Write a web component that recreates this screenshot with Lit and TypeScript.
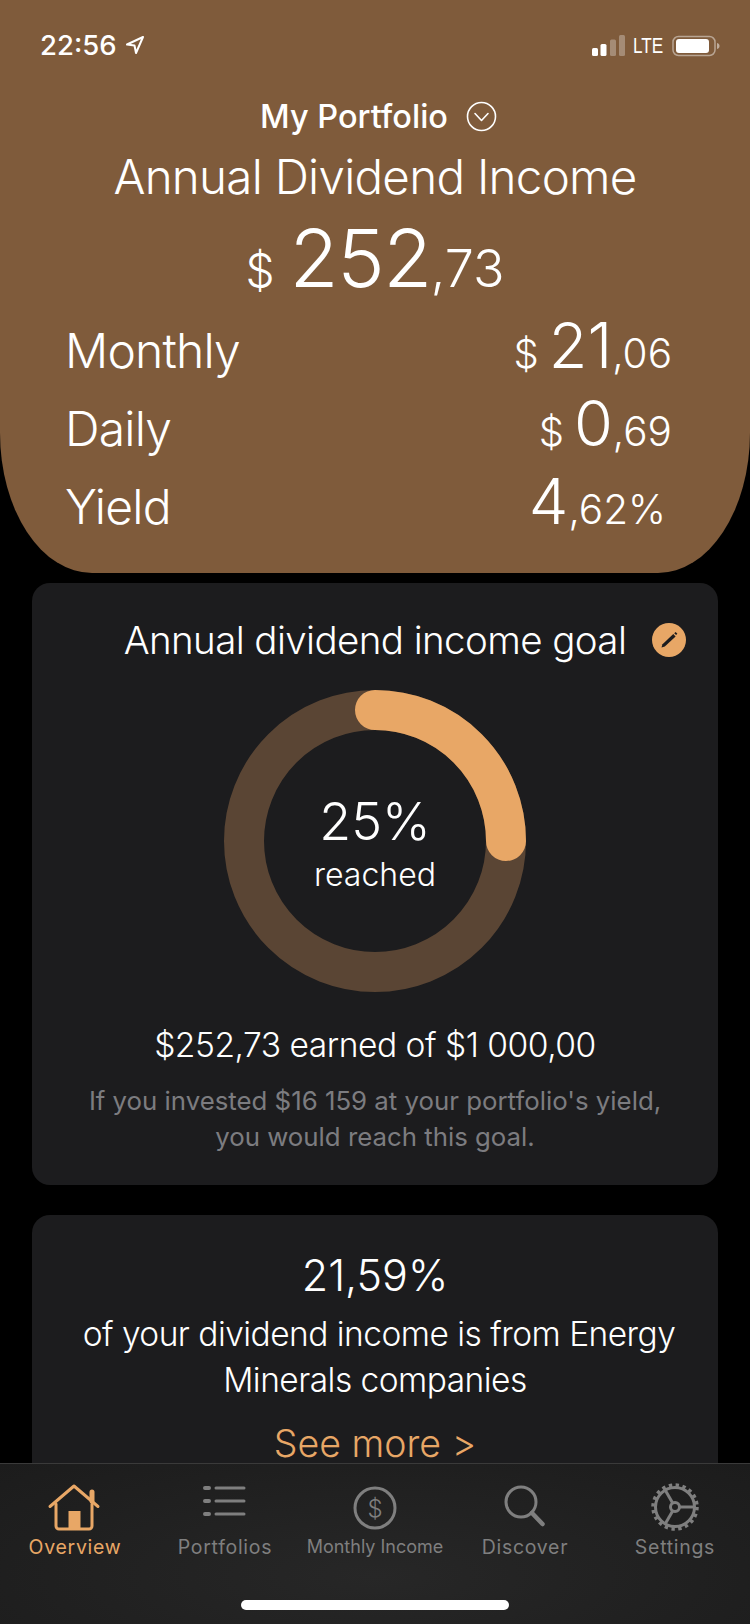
import { LitElement, html, css, svg } from "lit";
import { customElement } from "lit/decorators.js";

@customElement("app-root")
export class AppRoot extends LitElement {
  static styles = css`
    :host { display: flex; flex-direction: column; width: 750px; height: 1624px; overflow: hidden; background: #000; color: #fff; font-family: Inter, "Liberation Sans", sans-serif; }
    .main { flex: 1; min-height: 0; display: flex; flex-direction: column; }
    .head { flex: none; height: 573px; box-sizing: border-box; background: #7f5b3b; border-radius: 0 0 92px 92px / 0 0 140px 140px; display: flex; flex-direction: column; }
    .status { height: 88px; flex: none; box-sizing: border-box; padding: 30px 30px 0 40px; display: flex; justify-content: space-between; align-items: flex-start; }
    .time { display: flex; align-items: center; gap: 8px; font-size: 27.5px; line-height: 30px; font-weight: 500; }
    .sys { display: flex; align-items: center; gap: 7px; padding-top: 4px; }
    .lte { display: inline-block; width: 31px; margin-right: 1px; font-size: 22px; line-height: 24px; font-weight: 400; font-family: "Liberation Sans", sans-serif; transform: scaleX(0.78); transform-origin: left center; white-space: nowrap; }
    .pname { display: flex; justify-content: center; align-items: center; gap: 18px; height: 56px; font-size: 32.5px; font-weight: 500; padding-left: 7px; }
    .title { text-align: center; font-size: 47.5px; letter-spacing: -0.73px; line-height: 58px; font-weight: 300; margin-top: 4px; }
    .total { display: flex; justify-content: center; align-items: baseline; height: 92px; line-height: 92px; font-weight: 300; margin-top: 6px; }
    .total .d { font-size: 46px; margin-right: 15px; }
    .total .b { font-size: 80px; letter-spacing: -1.5px; }
    .total .c { font-size: 52px; }
    .rows { display: flex; flex-direction: column; padding: 2px 78px 0 65px; }
    .row { height: 78px; display: flex; justify-content: space-between; align-items: baseline; line-height: 78px; font-size: 48px; letter-spacing: -0.8px; font-weight: 300; }
    .val { letter-spacing: 0; }
    .val .d { font-size: 40px; margin-right: 10px; }
    .val .b { font-size: 63px; }
    .val .c { font-size: 40.5px; }
    .val.y { padding-right: 6px; }
    .card { flex: none; margin: 0 32px; background: #1c1c1e; border-radius: 18px; box-sizing: border-box; }
    .goal { margin-top: 10px; height: 602px; padding-top: 32px; display: flex; flex-direction: column; align-items: center; }
    .ghead { width: 100%; display: grid; grid-template-columns: 1fr auto 1fr; align-items: center; height: 50px; font-size: 38.5px; letter-spacing: -0.6px; font-weight: 300; }
    .ghead svg { justify-self: end; margin-right: 32px; }
    .ring { position: relative; width: 302px; height: 302px; margin-top: 25px; display: block; }
    .ring svg { display: block; }
    .rt { position: absolute; inset: 0; box-sizing: border-box; padding-top: 1px; display: flex; flex-direction: column; align-items: center; justify-content: center; }
    .pct { font-size: 52px; line-height: 66px; font-weight: 300; }
    .rch { font-size: 32px; line-height: 40px; font-weight: 300; }
    .earn { margin-top: 33px; font-size: 33.6px; letter-spacing: -0.5px; line-height: 40px; font-weight: 300; }
    .sub { margin-top: 18px; font-size: 25.8px; line-height: 36px; color: #7c7c80; text-align: center; font-weight: 400; }
    .info { margin-top: 30px; flex: 1; border-radius: 18px 18px 0 0; display: flex; flex-direction: column; align-items: center; text-align: center; padding-top: 36px; font-weight: 300; }
    .ipct { font-size: 43px; line-height: 48px; }
    .itxt { font-size: 33.5px; letter-spacing: -0.53px; line-height: 46px; margin-top: 12px; font-weight: 300; }
    .l1 { margin-left: 8px; }
    .more { font-size: 37.5px; line-height: 36px; color: #e8a766; margin-top: 23px; font-weight: 300; }
    .tabbar { position: relative; flex: none; height: 161px; box-sizing: border-box; border-top: 1px solid #3a3a3a; background: radial-gradient(ellipse at 50% 70%, #272727 0%, #1f1f1f 70%, #1c1c1c 100%); display: flex; flex-direction: column; align-items: center; }
    .tabs { width: 100%; display: grid; grid-template-columns: repeat(5, 1fr); padding-top: 18px; height: 118px; box-sizing: border-box; }
    .tab { display: flex; flex-direction: column; align-items: center; color: #7f7f7f; font-size: 19.5px; line-height: 24px; letter-spacing: 0.7px; white-space: nowrap; }
    .tab.on { color: #e8a766; }
    .tab.tight { font-size: 18px; letter-spacing: 0; }
    .tab svg { display: block; margin-bottom: 3px; }
    .list { transform: translateX(-2px); }
    .dtext { font: 300 24px Inter, sans-serif; fill: #7f7f7f; }
    .bar { width: 268px; height: 10px; border-radius: 5px; background: #fff; margin-top: 18px; }
  `;

  private ringSvg() {
    return html`<svg width="302" height="302" viewBox="0 0 302 302" fill="none">
      <circle cx="151" cy="151" r="131" stroke="#5a4534" stroke-width="40"></circle>
      <path d="M151 20A131 131 0 0 1 282 151" stroke="#e8a766" stroke-width="40" stroke-linecap="round"></path>
    </svg>`;
  }

  private gear() {
    const spokes = [0, 120, 240].map((a) => {
      const r = (a * Math.PI) / 180;
      return svg`<line x1=${25 + 5 * Math.cos(r)} y1=${25 + 5 * Math.sin(r)} x2=${25 + 20 * Math.cos(r)} y2=${25 + 20 * Math.sin(r)}></line>`;
    });
    return html`<svg width="50" height="50" viewBox="0 0 50 50" fill="none" stroke="#7f7f7f" stroke-width="3">
      <circle cx="25" cy="25" r="19.5"></circle>
      <circle cx="25" cy="25" r="22" stroke-width="3.5" stroke-dasharray="3.4 3.51"></circle>
      <circle cx="25" cy="25" r="4.5"></circle>
      ${spokes}
    </svg>`;
  }

  render() {
    return html`
      <div class="main">
        <div class="head">
          <div class="status">
            <div class="time">22:56
              <svg width="20" height="20" viewBox="0 0 20 20" fill="none" stroke="#fff" stroke-width="2" stroke-linejoin="round"><path d="M18 2 2 9.5l7.5 1L11 18z"></path></svg>
            </div>
            <div class="sys">
              <svg width="34" height="22" viewBox="0 0 34 22">
                <rect x="0" y="13" width="6" height="8" rx="1.5" fill="#fff"></rect>
                <rect x="8.5" y="9" width="6" height="12" rx="1.5" fill="#fff"></rect>
                <rect x="18" y="4.5" width="6" height="16.5" rx="1.5" fill="#fff" opacity=".3"></rect>
                <rect x="27" y="0" width="6" height="21" rx="1.5" fill="#fff" opacity=".3"></rect>
              </svg>
              <span class="lte">LTE</span>
              <svg width="48" height="22" viewBox="0 0 48 22" fill="none">
                <rect x="1" y="1.5" width="42" height="19" rx="5.5" stroke="#fff" stroke-opacity=".45" stroke-width="1.5"></rect>
                <rect x="4" y="4" width="33" height="14" rx="3" fill="#fff"></rect>
                <path d="M45 8c2 .6 2.5 1.5 2.5 3s-.5 2.4-2.5 3z" fill="#fff" fill-opacity=".5"></path>
              </svg>
            </div>
          </div>
          <div class="pname">My Portfolio
            <svg width="31" height="31" viewBox="0 0 31 31" fill="none" stroke="#fff" stroke-width="1.6"><circle cx="15.5" cy="15.5" r="14"></circle><path d="M9 12.5l6.5 7 6.5-7" stroke-linecap="round" stroke-linejoin="round"></path></svg>
          </div>
          <div class="title">Annual Dividend Income</div>
          <div class="total"><span class="d">$</span><span class="b">252</span><span class="c">,73</span></div>
          <div class="rows">
            <div class="row"><span>Monthly</span><span class="val"><span class="d">$</span><span class="b">21</span><span class="c">,06</span></span></div>
            <div class="row"><span>Daily</span><span class="val"><span class="d">$</span><span class="b">0</span><span class="c">,69</span></span></div>
            <div class="row"><span>Yield</span><span class="val y"><span class="b">4</span><span class="c">,62%</span></span></div>
          </div>
        </div>
        <div class="card goal">
          <div class="ghead"><span></span><span>Annual dividend income goal</span>
            <svg width="34" height="34" viewBox="0 0 34 34" fill="none"><circle cx="17" cy="17" r="17" fill="#e8a766"></circle><path d="M9.500 24.500l1-3.300 10.800-10.200 2.300 2.400-10.800 10.200z" fill="#1c1c1e"></path><path d="M22.200 10.200l1.400-1.300 1.800 1.800-1.300 1.400z" fill="#1c1c1e"></path></svg>
          </div>
          <div class="ring">${this.ringSvg()}
            <div class="rt"><div class="pct">25%</div><div class="rch">reached</div></div>
          </div>
          <div class="earn">$252,73 earned of $1 000,00</div>
          <div class="sub">If you invested $16 159 at your portfolio's yield,<br />you would reach this goal.</div>
        </div>
        <div class="card info">
          <div class="ipct">21,59%</div>
          <div class="itxt"><span class="l1">of your dividend income is from Energy</span><br />Minerals companies</div>
          <div class="more">See more &gt;</div>
        </div>
      </div>
      <div class="tabbar">
        <div class="tabs">
          <div class="tab on">
            <svg width="56" height="50" viewBox="0 0 56 50" fill="none" stroke="#e8a766" stroke-width="3" stroke-linecap="round" stroke-linejoin="round">
              <path d="M3 24.500 27 4l24 20.500"></path>
              <path d="M9 22v22a3 3 0 0 0 3 3h30a3 3 0 0 0 3-3V22"></path>
              <path d="M45 10v9" stroke-width="5"></path>
              <rect x="21.500" y="29" width="12" height="17" fill="#e8a766" stroke="none"></rect>
            </svg>
            Overview
          </div>
          <div class="tab">
            <svg class="list" width="56" height="50" viewBox="0 0 56 50" fill="none" stroke="#7f7f7f" stroke-width="3" stroke-linecap="round">
              <path d="M10 6h4M10 19h4M10 32h4" stroke-width="4"></path><path d="M21 6h28M21 19h28M21 32h28"></path>
            </svg>
            Portfolios
          </div>
          <div class="tab tight">
            <svg width="56" height="50" viewBox="0 0 56 50" fill="none"><circle cx="28" cy="26" r="20" stroke="#7f7f7f" stroke-width="3"></circle><text x="28" y="34.500" text-anchor="middle" class="dtext">$</text></svg>
            Monthly Income
          </div>
          <div class="tab">
            <svg width="56" height="50" viewBox="0 0 56 50" fill="none" stroke="#7f7f7f" stroke-width="3" stroke-linecap="round"><circle cx="24" cy="20" r="15"></circle><path d="M35 31l10.500 11" stroke-width="4.500"></path></svg>
            Discover
          </div>
          <div class="tab">${this.gear()}Settings</div>
        </div>
        <div class="bar"></div>
      </div>
    `;
  }
}
